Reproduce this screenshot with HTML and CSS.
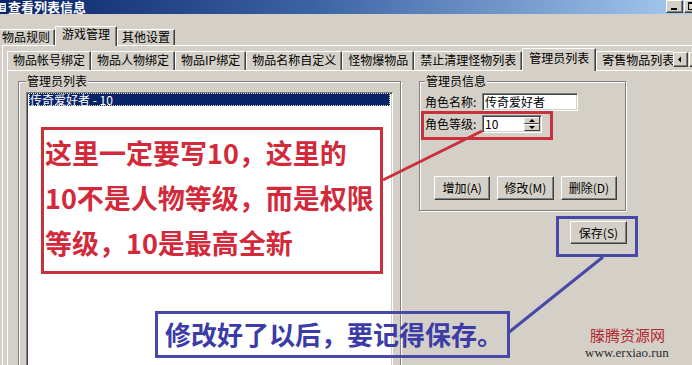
FILE: index.html
```html
<!DOCTYPE html>
<html lang="zh-CN">
<head>
<meta charset="utf-8">
<title>查看列表信息</title>
<link rel="stylesheet" href="styles.css">
</head>
<body>
<div class="window">
  <div class="titlebar">
    <svg class="app-icon" width="7" height="12" viewBox="0 0 7 12"><rect x="0" y="2" width="6" height="9" fill="#e8e8e8"/><path d="M1 4.5h4M1 6.5h4M1 8.5h3" stroke="#3a5a8a" stroke-width="1"/></svg>
    <span class="title-text">查看列表信息</span>
    <div class="win-btns">
      <span class="win-btn"><svg width="15" height="11" viewBox="0 0 15 11"><rect x="4" y="7" width="6" height="2" fill="#000"/></svg></span>
      <span class="win-btn"><svg width="15" height="11" viewBox="0 0 15 11"><rect x="3.5" y="1.5" width="8" height="7" fill="none" stroke="#000"/><rect x="3" y="1" width="9" height="2" fill="#000"/></svg></span>
    </div>
  </div>

  <div class="outer-tabs">
    <div class="otab otab-first">物品规则</div>
    <div class="otab otab-active">游戏管理</div>
    <div class="otab">其他设置</div>
  </div>

  <div class="outer-panel">
    <div class="inner-tabs">
      <div class="itab-strip">
        <div class="itab">物品帐号绑定</div>
        <div class="itab">物品人物绑定</div>
        <div class="itab">物品IP绑定</div>
        <div class="itab">物品名称自定义</div>
        <div class="itab">怪物爆物品</div>
        <div class="itab">禁止清理怪物列表</div>
        <div class="itab itab-active">管理员列表</div>
        <div class="itab">寄售物品列表</div>
      </div>
      <div class="tab-arrows">
        <span class="arrow-btn"><svg width="13" height="13" viewBox="0 0 13 13"><polygon points="4,6.5 7,3.5 7,9.5" fill="#000"/></svg></span>
        <span class="arrow-btn"><svg width="13" height="13" viewBox="0 0 13 13"><polygon points="9,6.5 6,3.5 6,9.5" fill="#000"/></svg></span>
      </div>
    </div>

    <div class="inner-panel">
      <fieldset class="group group-list">
        <legend class="group-label">管理员列表</legend>
        <div class="listbox">
          <div class="list-item list-item-selected">传奇爱好者 - 10</div>
        </div>
      </fieldset>

      <div class="right-col">
        <fieldset class="group group-info">
          <legend class="group-label">管理员信息</legend>
          <div class="field-row">
            <span class="field-label">角色名称:</span>
            <div class="textbox name-box">传奇爱好者</div>
          </div>
          <div class="field-row">
            <span class="field-label">角色等级:</span>
            <div class="textbox spin-box">
              <span class="spin-value">10</span>
              <svg class="spin" width="16" height="14" viewBox="0 0 16 14">
                <rect x="0" y="0" width="16" height="7" fill="#d4d0c8"/>
                <path d="M0 6.5V0.5H15.5" stroke="#fff" fill="none"/>
                <path d="M0.5 6.5H15.5V0" stroke="#404040" fill="none"/>
                <polygon points="5,5 11,5 8,2" fill="#000"/>
                <rect x="0" y="7" width="16" height="7" fill="#d4d0c8"/>
                <path d="M0 13.5V7.5H15.5" stroke="#fff" fill="none"/>
                <path d="M0.5 13.5H15.5V7" stroke="#404040" fill="none"/>
                <polygon points="5,9 11,9 8,12" fill="#000"/>
              </svg>
            </div>
          </div>
          <div class="btn-row">
            <button class="btn">增加(A)</button>
            <button class="btn">修改(M)</button>
            <button class="btn">删除(D)</button>
          </div>
        </fieldset>
        <div class="save-row">
          <button class="btn">保存(S)</button>
        </div>
      </div>
    </div>
  </div>

  <svg class="callout-lines" width="692" height="365" viewBox="0 0 692 365">
    <line x1="383" y1="180" x2="482" y2="131" stroke="#c8303c" stroke-width="3"/>
    <line x1="603" y1="257" x2="508" y2="333" stroke="#4848a8" stroke-width="3"/>
  </svg>

  <div class="mark mark-level"></div>
  <div class="mark mark-save"></div>

  <div class="note note-red">
    <span class="note-line">这里一定要写10，这里的</span>
    <span class="note-line">10不是人物等级，而是权限</span>
    <span class="note-line">等级，10是最高全新</span>
  </div>

  <div class="note note-blue">修改好了以后，要记得保存。</div>

  <div class="watermark">
    <div class="wm-name">滕腾资源网</div>
    <div class="wm-url">www.erxiao.run</div>
  </div>
</div>
</body>
</html>
```

FILE: styles.css
```css
* { box-sizing: border-box; }

html, body {
  margin: 0;
  padding: 0;
}

body {
  width: 692px;
  height: 365px;
  overflow: hidden;
  background: #d4d0c8;
  font-family: "Noto Sans CJK SC", "Liberation Sans", sans-serif;
  font-size: 12px;
  color: #000;
}

.window {
  position: relative;
  width: 692px;
  height: 365px;
  overflow: hidden;
  background: #d4d0c8;
}

/* Title bar */
.titlebar {
  height: 14px;
  display: flex;
  align-items: center;
  background: linear-gradient(to right, #0a246a 0%, #3b63a3 45%, #a6caf0 100%);
}

.app-icon {
  flex: none;
}

.title-text {
  margin-left: 1px;
  color: #fff;
  font-weight: 700;
  font-size: 13px;
  line-height: 14px;
  white-space: nowrap;
}

.win-btns {
  margin-left: auto;
  margin-right: -9px;
  align-self: flex-start;
  display: flex;
  gap: 1px;
}

.win-btn {
  width: 17px;
  height: 13px;
  background: #d4d0c8;
  border: 1px solid;
  border-color: #fff #404040 #404040 #fff;
  box-shadow: inset -1px -1px 0 #808080;
  display: flex;
}

.win-btn svg { display: block; }

/* Outer tabs */
.outer-tabs {
  margin-top: 12px;
  height: 19px;
  display: flex;
  align-items: flex-end;
}

.otab {
  height: 16px;
  padding: 0 4px;
  line-height: 14px;
  white-space: nowrap;
  background: #d4d0c8;
  border-top: 1px solid #fff;
  border-left: 1px solid #fff;
  border-right: 1px solid #404040;
  box-shadow: inset -1px 0 0 #808080;
}

.otab-first {
  margin-left: -4px;
  padding-left: 5px;
  padding-right: 4px;
}

.otab-active {
  position: relative;
  z-index: 1;
  height: 20px;
  margin-bottom: -1px;
  padding: 0 6px;
}

.outer-panel {
  margin-left: 2px;
  padding-left: 4px;
  border-top: 1px solid #fff;
  border-left: 1px solid #fff;
}

/* Inner tabs */
.inner-tabs {
  margin-top: 2px;
  height: 22px;
  display: flex;
  align-items: flex-end;
}

.itab-strip {
  flex: 0 0 666px;
  height: 23px;
  margin-bottom: -1px;
  display: flex;
  align-items: flex-end;
  overflow: hidden;
  position: relative;
  z-index: 1;
}

.itab {
  flex: none;
  height: 19px;
  margin-bottom: 1px;
  padding: 0 5px;
  line-height: 16px;
  white-space: nowrap;
  background: #d4d0c8;
  border-top: 1px solid #fff;
  border-left: 1px solid #fff;
  border-right: 1px solid #404040;
  box-shadow: inset -1px 0 0 #808080;
}

.itab-active {
  height: 23px;
  margin-bottom: 0;
  padding: 0 6px;
  line-height: 17px;
}

.tab-arrows {
  flex: none;
  display: flex;
  gap: 1px;
  margin-bottom: 3px;
}

.arrow-btn {
  width: 15px;
  height: 15px;
  background: #d4d0c8;
  border: 1px solid;
  border-color: #fff #404040 #404040 #fff;
  box-shadow: inset -1px -1px 0 #808080;
  display: flex;
}

.arrow-btn svg { display: block; }

/* Inner panel */
.inner-panel {
  height: 320px;
  display: flex;
  align-items: flex-start;
  padding: 4px 0 0 10px;
  border-top: 1px solid #fff;
  border-left: 1px solid #fff;
}

.group {
  margin: 0;
  min-width: 0;
  border: 1px solid #808080;
  box-shadow: inset 1px 1px 0 #fff, 1px 1px 0 #fff;
}

.group-label {
  padding: 0 1px;
  height: 12px;
  line-height: 12px;
  background: #d4d0c8;
  white-space: nowrap;
}

.group-list {
  flex: none;
  width: 383px;
  height: 320px;
  padding: 5px 7px 0 7px;
}

.listbox {
  height: 300px;
  background: #fff;
  border: 1px solid;
  border-color: #808080 #fff #fff #808080;
  box-shadow: inset 1px 1px 0 #404040, inset -1px -1px 0 #d4d0c8;
  padding: 0 2px 0 2px;
}

.list-item {
  height: 13px;
  line-height: 13px;
  padding-left: 1px;
  white-space: nowrap;
}

.list-item-selected {
  background: #0a246a;
  color: #fff;
  outline: 1px dotted #e8e4b0;
  outline-offset: -1px;
}

.right-col {
  flex: none;
  width: 207px;
  margin-left: 18px;
}

.group-info {
  width: 207px;
  padding: 6px 8px 10px 5px;
}

.field-row {
  display: flex;
  align-items: center;
  height: 18px;
  margin-bottom: 4px;
}

.field-label {
  flex: none;
  width: 57px;
  white-space: nowrap;
  line-height: 14px;
}

.textbox {
  height: 18px;
  background: #fff;
  border: 1px solid;
  border-color: #808080 #fff #fff #808080;
  box-shadow: inset 1px 1px 0 #404040, inset -1px -1px 0 #d4d0c8;
  padding: 1px 2px 0 2px;
  line-height: 14px;
  white-space: nowrap;
}

.name-box { width: 96px; }

.spin-box {
  width: 60px;
  display: flex;
  align-items: flex-start;
  padding-right: 1px;
}

.spin-value { flex: 1; }

.spin {
  display: block;
  flex: none;
}

.btn-row {
  display: flex;
  gap: 7px;
  margin-top: 43px;
  padding-left: 9px;
}

.btn {
  width: 57px;
  height: 24px;
  padding: 0;
  margin: 0;
  font-family: "Noto Sans CJK SC", "Liberation Sans", sans-serif;
  font-size: 12px;
  line-height: 14px;
  color: #000;
  background: #d4d0c8;
  border: 1px solid;
  border-color: #fff #404040 #404040 #fff;
  box-shadow: inset -1px -1px 0 #808080;
  white-space: nowrap;
}

.save-row {
  display: flex;
  justify-content: flex-end;
  margin-top: 10px;
  margin-right: -1px;
}

.save-row .btn { height: 23px; }

/* Annotations (overlaid on the screenshot) */
.callout-lines {
  position: absolute;
  left: 0;
  top: 0;
  z-index: 5;
  pointer-events: none;
}

.mark {
  position: absolute;
  z-index: 6;
  pointer-events: none;
}

.mark-level {
  left: 421px;
  top: 111px;
  width: 132px;
  height: 29px;
  border: 3px solid #c8303c;
}

.mark-save {
  left: 556px;
  top: 216px;
  width: 82px;
  height: 41px;
  border: 3px solid #4848a8;
}

.note {
  position: absolute;
  z-index: 6;
  font-weight: 700;
  white-space: nowrap;
}

.note-red {
  left: 41px;
  top: 127px;
  width: 342px;
  height: 147px;
  border: 3px solid #c8303c;
  padding: 0 0 0 1px;
  color: #d22a3a;
  font-size: 27px;
  line-height: 45px;
}

.note-line { display: block; }

.note-blue {
  left: 155px;
  top: 311px;
  width: 355px;
  height: 47px;
  border: 3px solid #4848a8;
  padding-left: 7px;
  color: #3c3ca8;
  font-size: 26px;
  line-height: 40px;
}

.watermark {
  position: absolute;
  z-index: 6;
  left: 585px;
  top: 324px;
  display: flex;
  flex-direction: column;
}

.wm-name {
  margin-left: 5px;
  font-size: 15px;
  line-height: 21px;
  color: #b3262e;
  white-space: nowrap;
}

.wm-url {
  font-family: "Liberation Serif", serif;
  font-size: 13px;
  line-height: 15px;
  color: #2a2a2a;
  white-space: nowrap;
}
```
